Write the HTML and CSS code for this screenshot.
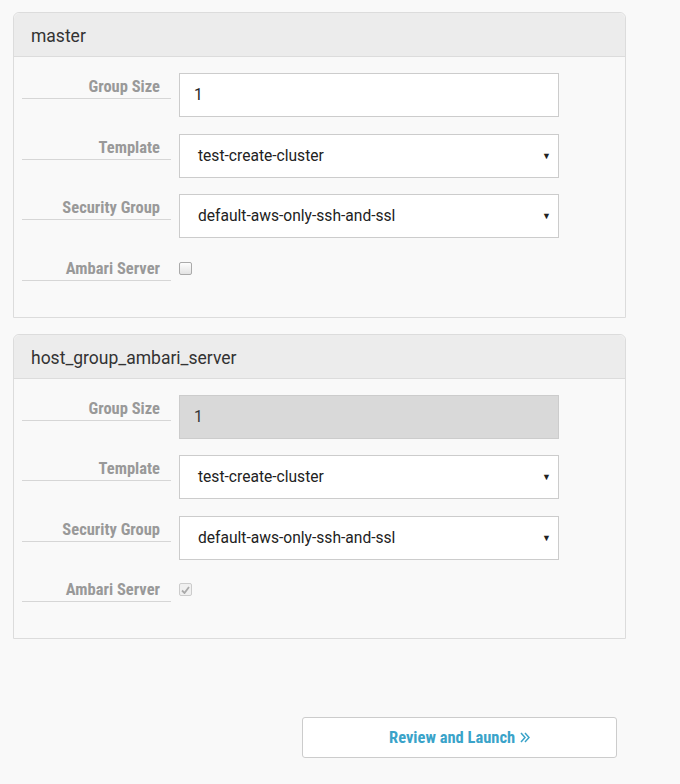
FILE: index.html
```html
<!DOCTYPE html>
<html lang="en">
<head>
  <meta charset="UTF-8">
  <title>Host Groups</title>
  <link rel="stylesheet" href="styles.css">
</head>
<body>
  <div class="page">
    <div class="panel">
      <div class="panel-heading">master</div>
      <div class="panel-body">
        <div class="form-row">
          <label class="form-label">Group Size</label>
          <input class="form-control" type="text" value="1">
        </div>
        <div class="form-row">
          <label class="form-label">Template</label>
          <div class="form-control select">test-create-cluster<span class="caret">&#9660;</span></div>
        </div>
        <div class="form-row">
          <label class="form-label">Security Group</label>
          <div class="form-control select">default-aws-only-ssh-and-ssl<span class="caret">&#9660;</span></div>
        </div>
        <div class="form-row check-row">
          <label class="form-label">Ambari Server</label>
          <span class="checkbox"></span>
        </div>
      </div>
    </div>

    <div class="panel">
      <div class="panel-heading">host_group_ambari_server</div>
      <div class="panel-body">
        <div class="form-row">
          <label class="form-label">Group Size</label>
          <input class="form-control disabled" type="text" value="1" disabled>
        </div>
        <div class="form-row">
          <label class="form-label">Template</label>
          <div class="form-control select">test-create-cluster<span class="caret">&#9660;</span></div>
        </div>
        <div class="form-row">
          <label class="form-label">Security Group</label>
          <div class="form-control select">default-aws-only-ssh-and-ssl<span class="caret">&#9660;</span></div>
        </div>
        <div class="form-row check-row">
          <label class="form-label">Ambari Server</label>
          <span class="checkbox checked">
            <svg width="9" height="8" viewBox="0 0 9 8"><path d="M1 4.5 L3.5 7 L8 1" fill="none" stroke="#aaa" stroke-width="1.8"/></svg>
          </span>
        </div>
      </div>
    </div>

    <div class="actions">
      <button class="btn-launch">Review and Launch
        <svg class="chev" width="10" height="11" viewBox="0 0 10 11"><path d="M1 1 L5 5.5 L1 10 M5 1 L9 5.5 L5 10" fill="none" stroke="#3aa3c9" stroke-width="1.5"/></svg>
      </button>
    </div>
  </div>
</body>
</html>
```

FILE: styles.css
```css
body {
  margin: 0;
  background-color: #f9f9f9;
  font-family: Roboto, "Noto Sans", sans-serif;
  color: #222;
}

.page {
  width: 613px;
  padding: 12px 0 0 13px;
}

.panel {
  border: 1px solid #dcdcdc;
  border-radius: 6px 6px 0 0;
  background-color: #f9f9f9;
  margin-bottom: 16px;
}

.panel-heading {
  background-color: #ececec;
  border-bottom: 1px solid #dcdcdc;
  border-radius: 6px 6px 0 0;
  height: 41px;
  padding-top: 2px;
  line-height: 43px;
  padding-left: 17px;
  font-size: 17.5px;
  color: #333;
}

.panel-body {
  padding: 16px 0 17px 8px;
}

.form-row {
  display: flex;
  align-items: flex-start;
  height: 44px;
  margin-bottom: 16.5px;
}

.form-label {
  width: 149px;
  box-sizing: border-box;
  border-bottom: 1px solid #d6d6d6;
  text-align: right;
  padding-right: 11px;
  margin-right: 8px;
  margin-top: 4px;
  height: 22px;
  line-height: 20px;
  font-family: "Roboto Condensed", Roboto, sans-serif;
  font-weight: bold;
  font-size: 16.5px;
  color: #999;
}

.form-control {
  width: 380px;
  height: 44px;
  box-sizing: border-box;
  border: 1px solid #ccc;
  background-color: #fff;
  padding: 0 14px;
  font-family: Roboto, sans-serif;
  font-size: 15.6px;
  color: #222;
  outline: none;
  margin: 0;
}

.form-control.disabled {
  background-color: #d9d9d9;
  color: #333;
}

.select {
  display: flex;
  align-items: center;
  justify-content: space-between;
  padding: 0 7px 0 18px;
}

.caret {
  font-size: 9px;
  color: #222;
}

.check-row {
  height: 28px;
  margin-bottom: 0;
  padding-bottom: 17px;
}

.checkbox {
  width: 11px;
  height: 11px;
  margin-top: 7px;
  border: 1px solid #aaa;
  border-radius: 2px;
  background: linear-gradient(#fdfdfd, #e3e3e3);
  display: flex;
  align-items: center;
  justify-content: center;
}

.checkbox.checked {
  border-color: #ccc;
  background: #f0f0f0;
}

.actions {
  display: flex;
  justify-content: flex-end;
  padding-top: 62px;
  padding-right: 9px;
}

.btn-launch {
  width: 315px;
  height: 41px;
  background-color: #fff;
  border: 1px solid #ccc;
  border-radius: 3px;
  font-family: "Roboto Condensed", Roboto, sans-serif;
  font-weight: bold;
  font-size: 16.5px;
  color: #3aa3c9;
  cursor: pointer;
}

.chev {
  margin-left: 1px;
}
```
